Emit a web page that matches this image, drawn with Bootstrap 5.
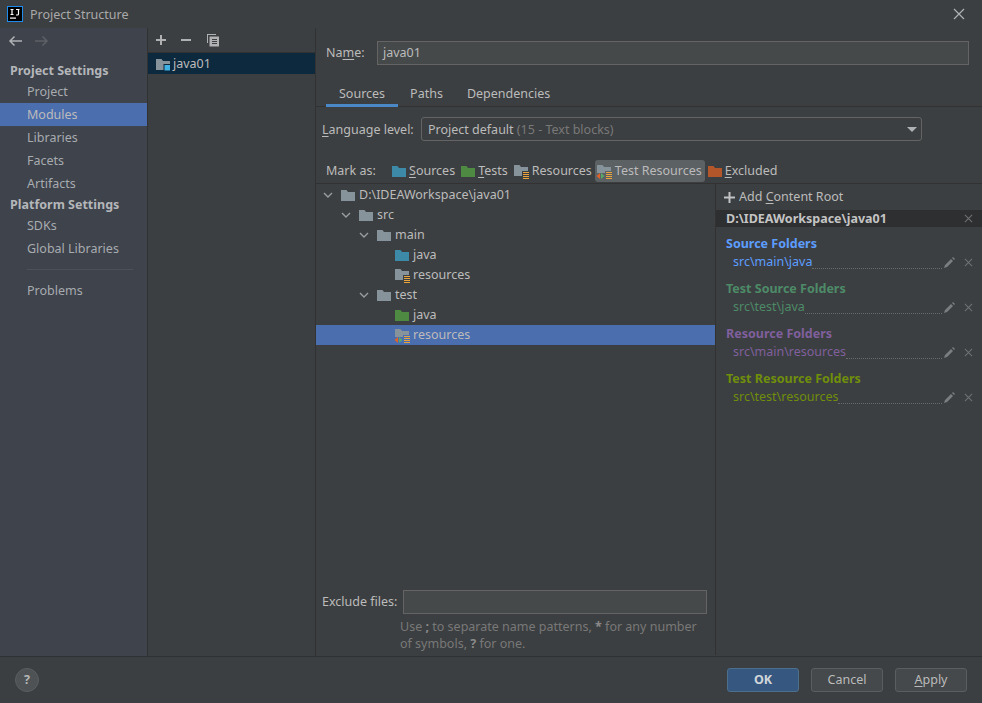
<!DOCTYPE html>
<html lang="en">

<head>
  <meta charset="UTF-8">
  <title>Project Structure</title>
  <meta name="viewport" content="width=device-width,initial-scale=1">
  <link href="https://cdn.jsdelivr.net/npm/bootstrap@5.3.3/dist/css/bootstrap.min.css" rel="stylesheet">
  <style>
    html, body { height: 703px; overflow: hidden; }
    body { background: #3c3f41; color: #bbbbbb; font: 12.5px/18px "Noto Sans", "Open Sans", sans-serif; }
    u { text-underline-offset: 2px; }
    svg { flex: none; display: block; }
    .dlg { width: 982px; height: 703px; }
    .titlebar { height: 28px; padding-left: 7px; color: #a9a9a9; }
    .titlebar .logo { margin-right: 7px; }
    .titlebar span { padding-top: 2px; }
    .titlebar .closer { margin-left: auto; margin-right: 17px; }
    .body-row { height: 629px; border-bottom: 1px solid #2f3133; }
    .side { width: 148px; background: #3e434c; border-right: 1px solid #323232; }
    .side-nav { height: 31px; padding: 7px 0 0 8px; gap: 13px; }
    .side-head { font-weight: 700; padding-left: 10px; height: 21px; line-height: 24px; color: #b4b6b9; }
    .side-head.next { height: 19px; line-height: 19px; }
    .side-item { padding-left: 27px; height: 23px; line-height: 23px; color: #a8abaf; }
    .side-item.on { background: #4b6eaf; color: #bbbbbb; }
    .side-rule { height: 1px; background: #4c5159; margin: 9px 14px 9px 27px; width: 106px; }
    .mods { width: 168px; border-right: 1px solid #323232; }
    .mods-bar { height: 25px; padding: 5px 0 0 6px; gap: 11px; border-bottom: 1px solid #323232; }
    .mods-bar .dup { margin-left: 2px; }
    .mods-row { height: 21px; background: #0d293e; padding-left: 7px; gap: 2px; margin-top: 0; color: #bbbbbb; }
    .mainp { width: 666px; }
    .name-row { height: 36px; padding: 13px 0 0 10px; }
    .name-row label { width: 51px; line-height: 23px; }
    .fld { background: #45494a; border: 1px solid #646464; height: 24px; line-height: 22px; padding-left: 5px; color: #bbbbbb; }
    .tabrow { height: 43px; padding: 15px 0 0 10px; border-bottom: 1px solid #323232; }
    .tabx { height: 28px; line-height: 29px; padding: 0 13px; color: #bbbbbb; }
    .tabx.on { border-bottom: 3px solid #4a88c7; height: 28px; }
    .tabx.mid { padding: 0 11px 0 12px; }
    .lang-row { height: 51px; padding: 10px 0 0 6px; }
    .lang-row label { width: 99px; line-height: 25px; }
    .lang-sel { width: 501px; height: 24px; line-height: 22px; background: #3c3f41; border: 1px solid #646464; border-radius: 3px; padding: 0 4px 0 6px; }
    .lang-sel .val { padding-top: 2px; }
    .lang-sel .muted { color: #787878; }
    .caret-d { width: 0; height: 0; border-left: 5px solid transparent; border-right: 5px solid transparent; border-top: 5px solid #afb1b3; margin-left: auto; }
    .mark-row { height: 26px; padding-left: 10px; border-bottom: 1px solid #323232; }
    .mark-row > .lbl { width: 65px; line-height: 24px; }
    .mk { height: 22px; gap: 2px; border-radius: 3px; margin-right: 5px; }
    .mk.res { gap: 3px; }
    .mk.on { background: #5c6164; gap: 3px; padding: 0 3px 0 1px; margin: 0 2px 0 -2px; }
    .content { height: 471px; }
    .treep { width: 400px; border-right: 1px solid #323232; }
    .tree { height: 401px; padding-top: 1px; }
    .tr-row { height: 20px; line-height: 20px; gap: 3px; }
    .tr-row.on { background: #4b6eaf; }
    .tr-row .chev { margin-right: 4px; }
    .lv0 { padding-left: 7px; } .lv1 { padding-left: 25px; } .lv2 { padding-left: 43px; } .lv3 { padding-left: 78px; }
    .exc { padding: 5px 0 0 6px; }
    .exc label { width: 81px; line-height: 23px; }
    .exc .fld { width: 304px; }
    .exc-hint { padding: 4px 0 0 84px; line-height: 17px; color: #787878; }
    .exc-hint div { white-space: pre; }
    .exc-hint b { color: #8a8a8a; }
    .roots { width: 266px; }
    .add-root { height: 26px; padding-left: 8px; gap: 4px; line-height: 26px; }
    .root-title { height: 17px; line-height: 17px; background: #2d2f31; padding-left: 10px; font-weight: 700; color: #c4c4c4; }
    .root-title svg { margin: 0 9px 0 auto; }
    .grp { height: 45px; padding-left: 10px; }
    .grp h6 { font: 700 12.5px/18px "Noto Sans", "Open Sans", sans-serif; margin: 0; height: 18px; }
    .grp-line { padding-left: 7px; height: 18px; line-height: 18px; }
    .dots { flex: 1; border-bottom: 1px dotted #6a6a6a; height: 13px; margin-right: 2px; }
    .grp-line svg.pen { margin-right: 9px; }
    .grp-line svg.xx { margin-right: 9px; }
    .g-src { padding-top: 8px; height: 53px; } .g-src, .g-src h6 { color: #5c9dff; }
    .g-tst, .g-tst h6 { color: #4d8a68; }
    .g-res, .g-res h6 { color: #7f5f9c; }
    .g-trs, .g-trs h6 { color: #6f8e0c; }
    .foot { height: 46px; padding: 11px 15px 0 15px; }
    .help { width: 24px; height: 24px; border-radius: 50%; background: #4e5254; border: 1px solid #5a5e60; color: #b4b6b8; font-weight: 700; line-height: 22px; text-align: center; }
    .idea-btn { width: 72px; height: 24px; line-height: 22px; text-align: center; background: #45494b; border: 1px solid #5a5e60; border-radius: 3px; color: #bbbbbb; margin-left: 12px; }
    .idea-btn.pri { background: #365880; border-color: #4c708c; font-weight: 700; color: #d0d5da; margin-left: auto; }
  </style>
</head>

<body>
  <!-- shared folder shapes -->
  <svg width="0" height="0" style="position:absolute">
    <defs>
      <path id="fld" d="M1 3h5.500l1.500 2h7v9H1z" />
      <g id="lines" fill="#e8a33d">
        <rect x="0" y="0" width="6" height="1" />
        <rect x="0" y="2" width="6" height="1" />
        <rect x="0" y="4" width="6" height="1" />
        <rect x="0" y="6" width="6" height="1" />
      </g>
      <g id="ico-res">
        <path d="M1 2h5.500l1.500 2h7v4h-6v5H1z" fill="#87939a" />
        <use href="#lines" x="10" y="9" />
      </g>
      <g id="ico-tres">
        <path d="M1 2h5.500l1.500 2h7v4h-6v2H1z" fill="#87939a" />
        <use href="#lines" x="10" y="9" />
        <path d="M4 10v6L0.500 13z" fill="#e0622a" />
        <path d="M5 10v6l3.500-3z" fill="#59a869" />
      </g>
      <g id="ico-x" stroke="#6e7173" stroke-width="1.200"><path d="M1 1l8 8M9 1l-8 8" /></g>
      <g id="ico-pen" fill="#7b7e80"><path d="M0 11l1-3 6-6 2 2-6 6zM8 1l1-1 2 2-1 1z" /></g>
      <g id="ico-chev" fill="none" stroke="#9a9da0" stroke-width="1.400"><path d="M1 1l4 4 4-4" /></g>
    </defs>
  </svg>

  <div class="dlg d-flex flex-column">
    <div class="titlebar d-flex align-items-center">
      <svg class="logo" width="16" height="16" viewBox="0 0 16 16">
        <rect x="0.500" y="0.500" width="15" height="15" fill="#000" stroke="#1f8ceb" />
        <rect x="3" y="11.500" width="6" height="1.200" fill="#fff" />
        <path d="M3.500 3.500h3M5 3.500v5M3.500 8.500h3M9 3.500h3.500M11.500 3.500v4.500q0 1-1 1H9" fill="none" stroke="#fff" stroke-width="1.200" />
      </svg>
      <span>Project Structure</span>
      <svg class="closer" width="12" height="12" viewBox="0 0 12 12"><path d="M1 1l10 10M11 1L1 11" stroke="#afb1b3" stroke-width="1.200" /></svg>
    </div>

    <div class="body-row d-flex">
      <div class="side">
        <div class="side-nav d-flex">
          <svg width="14" height="12" viewBox="0 0 14 12"><path d="M14 6H2M6.500 1.500L2 6l4.500 4.500" fill="none" stroke="#afb1b3" stroke-width="1.500" /></svg>
          <svg width="14" height="12" viewBox="0 0 14 12"><path d="M0 6h12M7.500 1.500L12 6l-4.500 4.500" fill="none" stroke="#5d6066" stroke-width="1.500" /></svg>
        </div>
        <div class="side-head">Project Settings</div>
        <div class="side-item">Project</div>
        <div class="side-item on">Modules</div>
        <div class="side-item">Libraries</div>
        <div class="side-item">Facets</div>
        <div class="side-item">Artifacts</div>
        <div class="side-head next">Platform Settings</div>
        <div class="side-item">SDKs</div>
        <div class="side-item">Global Libraries</div>
        <div class="side-rule"></div>
        <div class="side-item">Problems</div>
      </div>

      <div class="mods">
        <div class="mods-bar d-flex">
          <svg width="14" height="14" viewBox="0 0 14 14"><path d="M2 7h10M7 2v10" stroke="#afb1b3" stroke-width="2" /></svg>
          <svg width="14" height="14" viewBox="0 0 14 14"><path d="M2 7h10" stroke="#afb1b3" stroke-width="2" /></svg>
          <svg class="dup" width="14" height="14" viewBox="0 0 14 14"><path d="M1 1h9v1H2v8H1z" fill="#afb1b3" /><path d="M3.500 3.500h9.500v10H3.500z" fill="#afb1b3" /><path d="M6 6.500h5M6 8.500h5M6 10.500h5" stroke="#3c3f41" /></svg>
        </div>
        <div class="mods-row d-flex align-items-center">
          <svg width="16" height="16" viewBox="0 0 16 16"><use href="#fld" fill="#87939a" /><rect x="9" y="8.500" width="6.500" height="6.500" fill="#3fb1e3" stroke="#0d293e" /></svg>
          <span>java01</span>
        </div>
      </div>

      <div class="mainp">
        <div class="name-row d-flex">
          <label>Na<u>m</u>e:</label>
          <div class="fld" style="width:592px">java01</div>
        </div>
        <div class="tabrow d-flex">
          <div class="tabx on">Sources</div>
          <div class="tabx mid">Paths</div>
          <div class="tabx">Dependencies</div>
        </div>
        <div class="lang-row d-flex">
          <label><u>L</u>anguage level:</label>
          <div class="lang-sel d-flex align-items-center">
            <span class="val">Project default&nbsp;<span class="muted">(15 - Text blocks)</span></span>
            <span class="caret-d"></span>
          </div>
        </div>
        <div class="mark-row d-flex align-items-center">
          <span class="lbl">Mark as:</span>
          <span class="mk d-flex align-items-center"><svg width="16" height="16" viewBox="0 0 16 16"><use href="#fld" fill="#3d8aa8" /></svg><span><u>S</u>ources</span></span>
          <span class="mk d-flex align-items-center"><svg width="16" height="16" viewBox="0 0 16 16"><use href="#fld" fill="#4f8a43" /></svg><span><u>T</u>ests</span></span>
          <span class="mk res d-flex align-items-center"><svg width="16" height="16" viewBox="0 0 16 16"><use href="#ico-res" /></svg><span>Resources</span></span>
          <span class="mk on d-flex align-items-center"><svg width="16" height="16" viewBox="0 0 16 16"><use href="#ico-tres" /></svg><span>Test Resources</span></span>
          <span class="mk d-flex align-items-center"><svg width="16" height="16" viewBox="0 0 16 16"><use href="#fld" fill="#b3562a" /></svg><span><u>E</u>xcluded</span></span>
        </div>

        <div class="content d-flex">
          <div class="treep">
            <div class="tree">
              <div class="tr-row lv0 d-flex align-items-center"><svg class="chev" width="10" height="7" viewBox="0 0 10 7"><use href="#ico-chev" /></svg><svg width="16" height="16" viewBox="0 0 16 16"><use href="#fld" fill="#87939a" /></svg><span>D:\IDEAWorkspace\java01</span></div>
              <div class="tr-row lv1 d-flex align-items-center"><svg class="chev" width="10" height="7" viewBox="0 0 10 7"><use href="#ico-chev" /></svg><svg width="16" height="16" viewBox="0 0 16 16"><use href="#fld" fill="#87939a" /></svg><span>src</span></div>
              <div class="tr-row lv2 d-flex align-items-center"><svg class="chev" width="10" height="7" viewBox="0 0 10 7"><use href="#ico-chev" /></svg><svg width="16" height="16" viewBox="0 0 16 16"><use href="#fld" fill="#87939a" /></svg><span>main</span></div>
              <div class="tr-row lv3 d-flex align-items-center"><svg width="16" height="16" viewBox="0 0 16 16"><use href="#fld" fill="#3d8aa8" /></svg><span>java</span></div>
              <div class="tr-row lv3 d-flex align-items-center"><svg width="16" height="16" viewBox="0 0 16 16"><use href="#ico-res" /></svg><span>resources</span></div>
              <div class="tr-row lv2 d-flex align-items-center"><svg class="chev" width="10" height="7" viewBox="0 0 10 7"><use href="#ico-chev" /></svg><svg width="16" height="16" viewBox="0 0 16 16"><use href="#fld" fill="#87939a" /></svg><span>test</span></div>
              <div class="tr-row lv3 d-flex align-items-center"><svg width="16" height="16" viewBox="0 0 16 16"><use href="#fld" fill="#4f8a43" /></svg><span>java</span></div>
              <div class="tr-row lv3 on d-flex align-items-center"><svg width="16" height="16" viewBox="0 0 16 16"><use href="#ico-tres" /></svg><span>resources</span></div>
            </div>
            <div class="exc d-flex">
              <label>Exclude files:</label>
              <div class="fld"></div>
            </div>
            <div class="exc-hint">
              <div><span>Use </span><b>;</b><span> to separate name patterns, </span><b>*</b><span> for any number</span></div>
              <div><span>of symbols, </span><b>?</b><span> for one.</span></div>
            </div>
          </div>

          <div class="roots">
            <div class="add-root d-flex align-items-center">
              <svg width="11" height="11" viewBox="0 0 11 11"><path d="M0 5.500h11M5.500 0v11" stroke="#c0c2c4" stroke-width="2" /></svg>
              <span>Add <u>C</u>ontent Root</span>
            </div>
            <div class="root-title d-flex align-items-center">
              <span>D:\IDEAWorkspace\java01</span>
              <svg width="9" height="9" viewBox="0 0 10 10"><use href="#ico-x" /></svg>
            </div>
            <div class="grp g-src">
              <h6>Source Folders</h6>
              <div class="grp-line d-flex align-items-center"><span>src\main\java</span><span class="dots"></span><svg class="pen" width="11" height="11" viewBox="0 0 11 11"><use href="#ico-pen" /></svg><svg class="xx" width="9" height="9" viewBox="0 0 10 10"><use href="#ico-x" /></svg></div>
            </div>
            <div class="grp g-tst">
              <h6>Test Source Folders</h6>
              <div class="grp-line d-flex align-items-center"><span>src\test\java</span><span class="dots"></span><svg class="pen" width="11" height="11" viewBox="0 0 11 11"><use href="#ico-pen" /></svg><svg class="xx" width="9" height="9" viewBox="0 0 10 10"><use href="#ico-x" /></svg></div>
            </div>
            <div class="grp g-res">
              <h6>Resource Folders</h6>
              <div class="grp-line d-flex align-items-center"><span>src\main\resources</span><span class="dots"></span><svg class="pen" width="11" height="11" viewBox="0 0 11 11"><use href="#ico-pen" /></svg><svg class="xx" width="9" height="9" viewBox="0 0 10 10"><use href="#ico-x" /></svg></div>
            </div>
            <div class="grp g-trs">
              <h6>Test Resource Folders</h6>
              <div class="grp-line d-flex align-items-center"><span>src\test\resources</span><span class="dots"></span><svg class="pen" width="11" height="11" viewBox="0 0 11 11"><use href="#ico-pen" /></svg><svg class="xx" width="9" height="9" viewBox="0 0 10 10"><use href="#ico-x" /></svg></div>
            </div>
          </div>
        </div>
      </div>
    </div>

    <div class="foot d-flex">
      <div class="help">?</div>
      <div class="idea-btn pri">OK</div>
      <div class="idea-btn">Cancel</div>
      <div class="idea-btn"><u>A</u>pply</div>
    </div>
  </div>

  <script src="https://cdn.jsdelivr.net/npm/bootstrap@5.3.3/dist/js/bootstrap.bundle.min.js"></script>
</body>

</html>
